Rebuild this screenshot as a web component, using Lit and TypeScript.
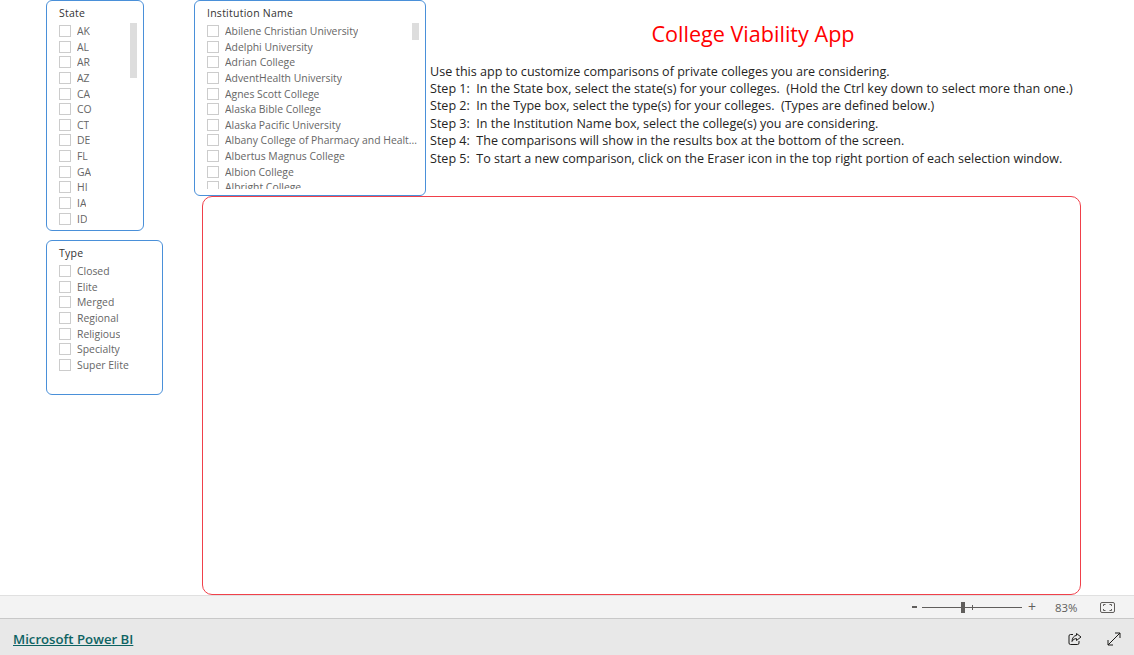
import { LitElement, html, css } from "lit";
import { customElement, property } from "lit/decorators.js";

@customElement("slicer-box")
class SlicerBox extends LitElement {
  @property() heading = "";
  @property({ type: Array }) items: string[] = [];
  @property({ type: Number }) thumb = 0;
  static styles = css`
    :host { display: block; box-sizing: border-box; border: 1px solid #4a90d9; border-radius: 6px; background: #fff; padding: 5px 6px 0 12px; overflow: hidden; font-family: "Open Sans", "Noto Sans", sans-serif; }
    .title { font-size: 10.5px; line-height: 14px; color: #333; letter-spacing: 0.25px; }
    .body { position: relative; margin-top: 3.3px; overflow: hidden; height: var(--list-h); }
    .row { display: flex; align-items: center; gap: 6px; height: 15.64px; font-size: 10.4px; color: #666; white-space: nowrap; }
    .box { flex: none; width: 10px; height: 10px; border: 1px solid #ccc; box-sizing: content-box; }
    .label { overflow: hidden; text-overflow: ellipsis; min-width: 0; }
    .thumb { position: absolute; top: 0; right: 0; width: 7px; background: #ddd; }
  `;
  render() {
    return html`<div class="title">${this.heading}</div>
      <div class="body">
        <div class="list">${this.items.map((i) => html`<div class="row"><span class="box"></span><span class="label">${i}</span></div>`)}</div>
        ${this.thumb ? html`<div class="thumb" style="height:${this.thumb}px"></div>` : ""}
      </div>`;
  }
}

const states = ["AK","AL","AR","AZ","CA","CO","CT","DE","FL","GA","HI","IA","ID"];
const types = ["Closed","Elite","Merged","Regional","Religious","Specialty","Super Elite"];
const colleges = ["Abilene Christian University","Adelphi University","Adrian College","AdventHealth University","Agnes Scott College","Alaska Bible College","Alaska Pacific University","Albany College of Pharmacy and Healt...","Albertus Magnus College","Albion College","Albright College"];

@customElement("app-root")
export class AppRoot extends LitElement {
  static styles = css`
    :host { display: flex; flex-direction: column; width: 1134px; height: 655px; overflow: hidden; background: #fff; font-family: "Open Sans", "Noto Sans", sans-serif; }
    .canvas { flex: none; height: 595px; display: flex; padding: 0 0 0 46px; box-sizing: border-box; }
    .left { flex: none; width: 148px; display: flex; flex-direction: column; gap: 9px; }
    .state { width: 98px; height: 231px; --list-h: 204px; }
    .type { width: 117px; height: 155px; --list-h: 120px; }
    .main { flex: none; width: 887px; display: flex; flex-direction: column; }
    .top { display: flex; height: 196px; }
    .inst { flex: none; width: 232px; height: 196px; --list-h: 166px; }
    .intro { flex: 1; padding: 20px 0 0 4px; min-width: 0; }
    h1 { margin: 0 0 14.5px; font-weight: 400; font-size: 21.6px; line-height: 28px; color: #ff0000; text-align: center; padding-right: 5px; }
    p { margin: 0; font-size: 12.55px; line-height: 17.4px; color: #252423; white-space: pre; }
    .result { margin-left: 8px; width: 879px; height: 399px; box-sizing: border-box; border: 1px solid #f0404a; border-radius: 10px; }
    .zoombar { flex: none; height: 24px; box-sizing: border-box; background: #f3f3f3; border-top: 1px solid #e0e0e0; border-bottom: 1px solid #c8c8c8; display: flex; align-items: center; justify-content: flex-end; padding-right: 19px; color: #605e5c; font-size: 11.4px; }
    .minus { width: 5px; height: 2px; background: #605e5c; margin-right: 5px; }
    .slider { position: relative; width: 100px; height: 1px; background: #605e5c; }
    .handle { position: absolute; left: 39px; top: -5px; width: 4px; height: 11px; background: #605e5c; }
    .tick { position: absolute; left: 50px; top: -2px; width: 1px; height: 5px; background: #605e5c; }
    .plus { margin-left: 6px; width: 8px; font-size: 14px; line-height: 14px; }
    .pct { margin-left: 19px; width: 24px; }
    .fit { margin-left: 21px; display: block; }
    .footer { flex: 1; background: #e8e8e8; display: flex; align-items: center; padding: 4px 13px 0 13px; }
    .footer a { color: #0e6363; font-size: 13.2px; font-weight: 600; text-decoration: underline; flex: 1; }
    .footer svg { display: block; }
    .share { margin-right: 25px; }
    svg { fill: none; }
  `;
  render() {
    return html`
      <div class="canvas">
        <div class="left">
          <slicer-box class="state" heading="State" .items=${states} thumb="55"></slicer-box>
          <slicer-box class="type" heading="Type" .items=${types}></slicer-box>
        </div>
        <div class="main">
          <div class="top">
            <slicer-box class="inst" heading="Institution Name" .items=${colleges} thumb="17"></slicer-box>
            <div class="intro">
              <h1>College Viability App</h1>
              <p>Use this app to customize comparisons of private colleges you are considering.
Step 1:  In the State box, select the state(s) for your colleges.  (Hold the Ctrl key down to select more than one.)
Step 2:  In the Type box, select the type(s) for your colleges.  (Types are defined below.)
Step 3:  In the Institution Name box, select the college(s) you are considering.
Step 4:  The comparisons will show in the results box at the bottom of the screen.
Step 5:  To start a new comparison, click on the Eraser icon in the top right portion of each selection window.</p>
            </div>
          </div>
          <div class="result"></div>
        </div>
      </div>
      <div class="zoombar">
        <span class="minus"></span>
        <div class="slider"><span class="handle"></span><span class="tick"></span></div>
        <span class="plus">+</span>
        <span class="pct">83%</span>
        <svg class="fit" width="15" height="11" viewBox="0 0 15 11" stroke="#605e5c">
          <rect x="0.5" y="0.5" width="14" height="10" rx="1.5"/>
          <path d="M3.5 4V2.5H5.5M9.5 2.5H11.5V4M11.5 7V8.5H9.5M5.5 8.5H3.5V7"/>
        </svg>
      </div>
      <div class="footer">
        <a href="#">Microsoft Power BI</a>
        <svg class="share" width="14" height="14" viewBox="0 0 14 14" stroke="#1b1a19">
          <path d="M5 2.5H2.5a1.5 1.5 0 0 0-1.5 1.5v7a1.5 1.5 0 0 0 1.5 1.5h7a1.5 1.5 0 0 0 1.5-1.5V9"/>
          <path d="M8.5 1.5L13 5L8.5 8.5V6.6C6.5 6.6 5 7.5 4 9.5C4 6 6 3.6 8.5 3.4Z"/>
        </svg>
        <svg width="14" height="14" viewBox="0 0 14 14" stroke="#1b1a19">
          <path d="M1 13L13 1M8 1H13V6M1 8V13H6"/>
        </svg>
      </div>
    `;
  }
}
